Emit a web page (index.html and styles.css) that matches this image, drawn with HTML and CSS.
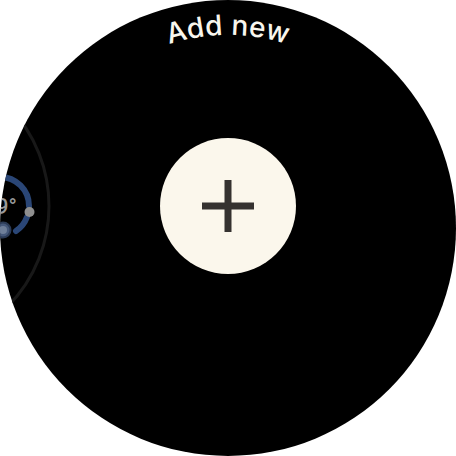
FILE: index.html
```html
<!DOCTYPE html>
<html lang="en">
<head>
<meta charset="utf-8">
<title>Add new</title>
<link rel="stylesheet" href="styles.css">
</head>
<body>
<main class="watch">
  <svg class="curved-title" viewBox="0 0 456 456" width="456" height="456">
    <defs><path id="title-arc" d="M 35 228 A 193 193 0 0 1 421 228"/></defs>
    <text class="curved-title-text"><textPath href="#title-arc" startOffset="50%" text-anchor="middle">Add new</textPath></text>
  </svg>
  <svg class="peek-tile" viewBox="0 0 60 456" width="60" height="456">
    <circle class="peek-ring" cx="-94" cy="206" r="143"/>
    <path class="peek-gauge" d="M 0 177 A 29 29 0 0 1 29 206"/>
    <path class="peek-gauge" d="M 27 217 A 29 29 0 0 1 16 231"/>
    <circle class="peek-dot" cx="29.5" cy="212" r="5"/>
    <circle class="peek-badge" cx="3" cy="230" r="7.5"/>
    <circle class="peek-badge-core" cx="3" cy="230" r="4"/>
    <text class="peek-temp" x="17" y="214" text-anchor="end">9°</text>
  </svg>
  <button class="add-button" type="button" aria-label="Add new">
    <svg class="add-icon" viewBox="0 0 52 52" width="52" height="52"><path d="M22.5 0h7v22.5H52v7H29.5V52h-7V29.5H0v-7h22.5z"/></svg>
  </button>
</main>
</body>
</html>
```
FILE: styles.css
```css
html, body {
  margin: 0;
  padding: 0;
  background: #ffffff;
}

.watch {
  position: relative;
  width: 456px;
  height: 456px;
  box-sizing: border-box;
  padding-top: 138px;
  display: flex;
  justify-content: center;
  align-items: flex-start;
  border-radius: 50%;
  background: #000000;
  overflow: hidden;
}

.curved-title,
.peek-tile {
  position: absolute;
  top: 0;
  left: 0;
}

.curved-title-text {
  font-family: "Inter", sans-serif;
  font-size: 28px;
  font-weight: 500;
  letter-spacing: 0.3px;
  fill: #f8f6ee;
}

.peek-ring {
  fill: none;
  stroke: #181818;
  stroke-width: 3;
}

.peek-gauge {
  fill: none;
  stroke: #2a4676;
  stroke-width: 6;
  stroke-linecap: round;
}

.peek-dot {
  fill: #8f8f8f;
}

.peek-badge {
  fill: #45587a;
  stroke: #2b3a55;
  stroke-width: 2;
}

.peek-badge-core {
  fill: #6f7f99;
}

.peek-temp {
  font-family: "Roboto", sans-serif;
  font-size: 22px;
  font-weight: 500;
  fill: #999999;
}

.add-button {
  width: 136px;
  height: 136px;
  padding: 0;
  border: 0;
  border-radius: 50%;
  background: #fbf7ec;
  display: flex;
  align-items: center;
  justify-content: center;
}

.add-icon {
  fill: #353230;
}
```
